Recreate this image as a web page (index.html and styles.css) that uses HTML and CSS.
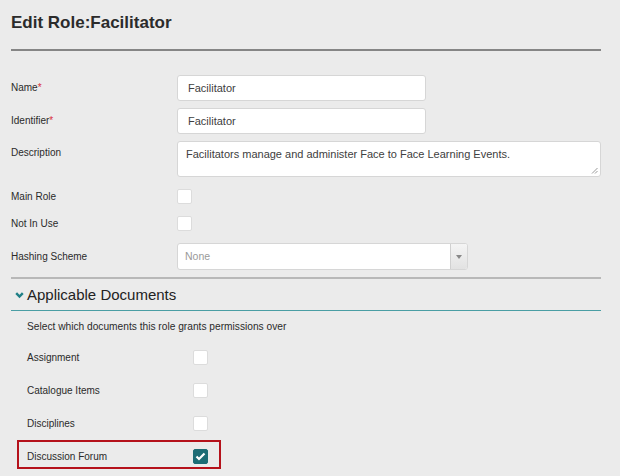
FILE: index.html
```html
<!DOCTYPE html>
<html>
<head>
<meta charset="utf-8">
<link rel="stylesheet" href="styles.css">
</head>
<body>
<div class="page">
  <h1 class="title">Edit Role:Facilitator</h1>
  <div class="title-rule"></div>

  <div class="form">
    <div class="row row-input">
      <label class="label">Name<span class="req">*</span></label>
      <div class="input input-short">Facilitator</div>
    </div>
    <div class="row row-input">
      <label class="label">Identifier<span class="req">*</span></label>
      <div class="input input-short">Facilitator</div>
    </div>
    <div class="row row-text">
      <label class="label">Description</label>
      <div class="textarea">Facilitators manage and administer Face to Face Learning Events.
        <svg class="grip" width="7" height="7" viewBox="0 0 7 7"><path d="M6.5 1 L1 6.5 M6.5 4 L4 6.5" stroke="#999" stroke-width="1"/></svg>
      </div>
    </div>
    <div class="row row-check">
      <label class="label">Main Role</label>
      <span class="check"></span>
    </div>
    <div class="row row-check">
      <label class="label">Not In Use</label>
      <span class="check"></span>
    </div>
    <div class="row row-select">
      <label class="label">Hashing Scheme</label>
      <div class="select">
        <span class="select-value">None</span>
        <span class="select-btn"><svg width="6" height="4" viewBox="0 0 6 4"><path d="M0 0 H6 L3 4 Z" fill="#888"/></svg></span>
      </div>
    </div>
  </div>

  <div class="section-rule"></div>
  <div class="section-head">
    <svg class="chev" width="9" height="7" viewBox="0 0 9 7"><path d="M1.2 1.2 L4.5 4.6 L7.8 1.2" fill="none" stroke="#1f7f86" stroke-width="2.4"/></svg>
    <span>Applicable Documents</span>
  </div>

  <div class="section-body">
    <p class="hint">Select which documents this role grants permissions over</p>
    <div class="doc-list">
      <div class="doc-row"><span class="doc-label">Assignment</span><span class="check"></span></div>
      <div class="doc-row"><span class="doc-label">Catalogue Items</span><span class="check"></span></div>
      <div class="doc-row"><span class="doc-label">Disciplines</span><span class="check"></span></div>
      <div class="doc-row doc-row-hl"><span class="doc-label">Discussion Forum</span>
        <span class="check checked"><svg width="11" height="9" viewBox="0 0 11 9"><path d="M1.5 4.5 L4 7 L9.5 1.5" fill="none" stroke="#fff" stroke-width="2.2"/></svg></span>
      </div>
    </div>
  </div>
</div>
</body>
</html>
```

FILE: styles.css
```css
html, body {
  margin: 0;
  padding: 0;
  background: #ebebeb;
}
body {
  font-family: "Liberation Sans", Arial, sans-serif;
  color: #2a2a2a;
}
.page {
  width: 590px;
  padding-left: 11px;
}
.title {
  margin: 11px 0 0 0;
  font-size: 17px;
  line-height: 24px;
  font-weight: bold;
  color: #2b2b2b;
}
.title-rule {
  margin-top: 14px;
  height: 2px;
  background: #858585;
}
.form {
  margin-top: 24px;
  display: flex;
  flex-direction: column;
}
.row {
  display: flex;
  align-items: flex-start;
}
.label {
  width: 166px;
  flex: none;
  font-size: 10px;
  color: #2a2a2a;
}
.req {
  color: #d9303a;
}
.row-input .label { line-height: 26px; }
.row-input + .row-input { margin-top: 7px; }
.row-text { margin-top: 7px; }
.row-text .label { line-height: 24px; }
.row-check { margin-top: 12px; }
.row-check .label { line-height: 15px; }
.row-select { margin-top: 12px; }
.row-select .label { line-height: 27px; }

.input {
  box-sizing: border-box;
  height: 26px;
  background: #fff;
  border: 1px solid #d6d6d6;
  border-radius: 3px;
  padding-left: 10px;
  font-size: 11px;
  line-height: 24px;
  color: #404040;
}
.input-short { width: 249px; }
.textarea {
  position: relative;
  box-sizing: border-box;
  width: 424px;
  height: 36px;
  background: #fff;
  border: 1px solid #d6d6d6;
  border-radius: 3px;
  padding: 5px 8px;
  font-size: 11px;
  line-height: 14px;
  color: #404040;
}
.grip {
  position: absolute;
  right: 2px;
  bottom: 2px;
}
.check {
  box-sizing: border-box;
  width: 15px;
  height: 15px;
  background: #fff;
  border: 1px solid #dcdcdc;
  border-radius: 2px;
  display: inline-flex;
  align-items: center;
  justify-content: center;
  flex: none;
}
.check.checked {
  background: #1d6c75;
  border-color: #1d6c75;
}
.select {
  box-sizing: border-box;
  width: 291px;
  height: 27px;
  background: #fff;
  border: 1px solid #d6d6d6;
  border-radius: 3px;
  display: flex;
  overflow: hidden;
}
.select-value {
  flex: 1;
  padding-left: 7px;
  font-size: 10.5px;
  line-height: 25px;
  color: #9a9a9a;
}
.select-btn {
  width: 16px;
  border-left: 1px solid #d0d0d0;
  background: linear-gradient(#f4f4f4, #e2e2e2);
  display: flex;
  align-items: center;
  justify-content: center;
}
.section-rule {
  margin-top: 7px;
  height: 2px;
  background: #b8b8b8;
}
.section-head {
  height: 31px;
  display: flex;
  align-items: center;
  font-size: 15px;
  color: #222;
  border-bottom: 1px solid #4a9ea4;
}
.chev {
  margin-left: 4px;
  margin-right: 3px;
  margin-top: 1px;
}
.section-body {
  padding-left: 6px;
}
.hint {
  margin: 8px 0 0 10px;
  font-size: 10.2px;
  line-height: 16px;
  color: #2a2a2a;
}
.doc-list {
  margin-top: 6px;
  display: flex;
  flex-direction: column;
  gap: 4px;
}
.doc-row {
  box-sizing: border-box;
  width: 204px;
  height: 29px;
  border: 2px solid transparent;
  padding: 7px 0 0 8px;
  display: flex;
  align-items: flex-start;
}
.doc-row-hl {
  border-color: #b5121b;
}
.doc-label {
  width: 166px;
  flex: none;
  font-size: 10px;
  line-height: 15px;
  color: #2a2a2a;
}
```
